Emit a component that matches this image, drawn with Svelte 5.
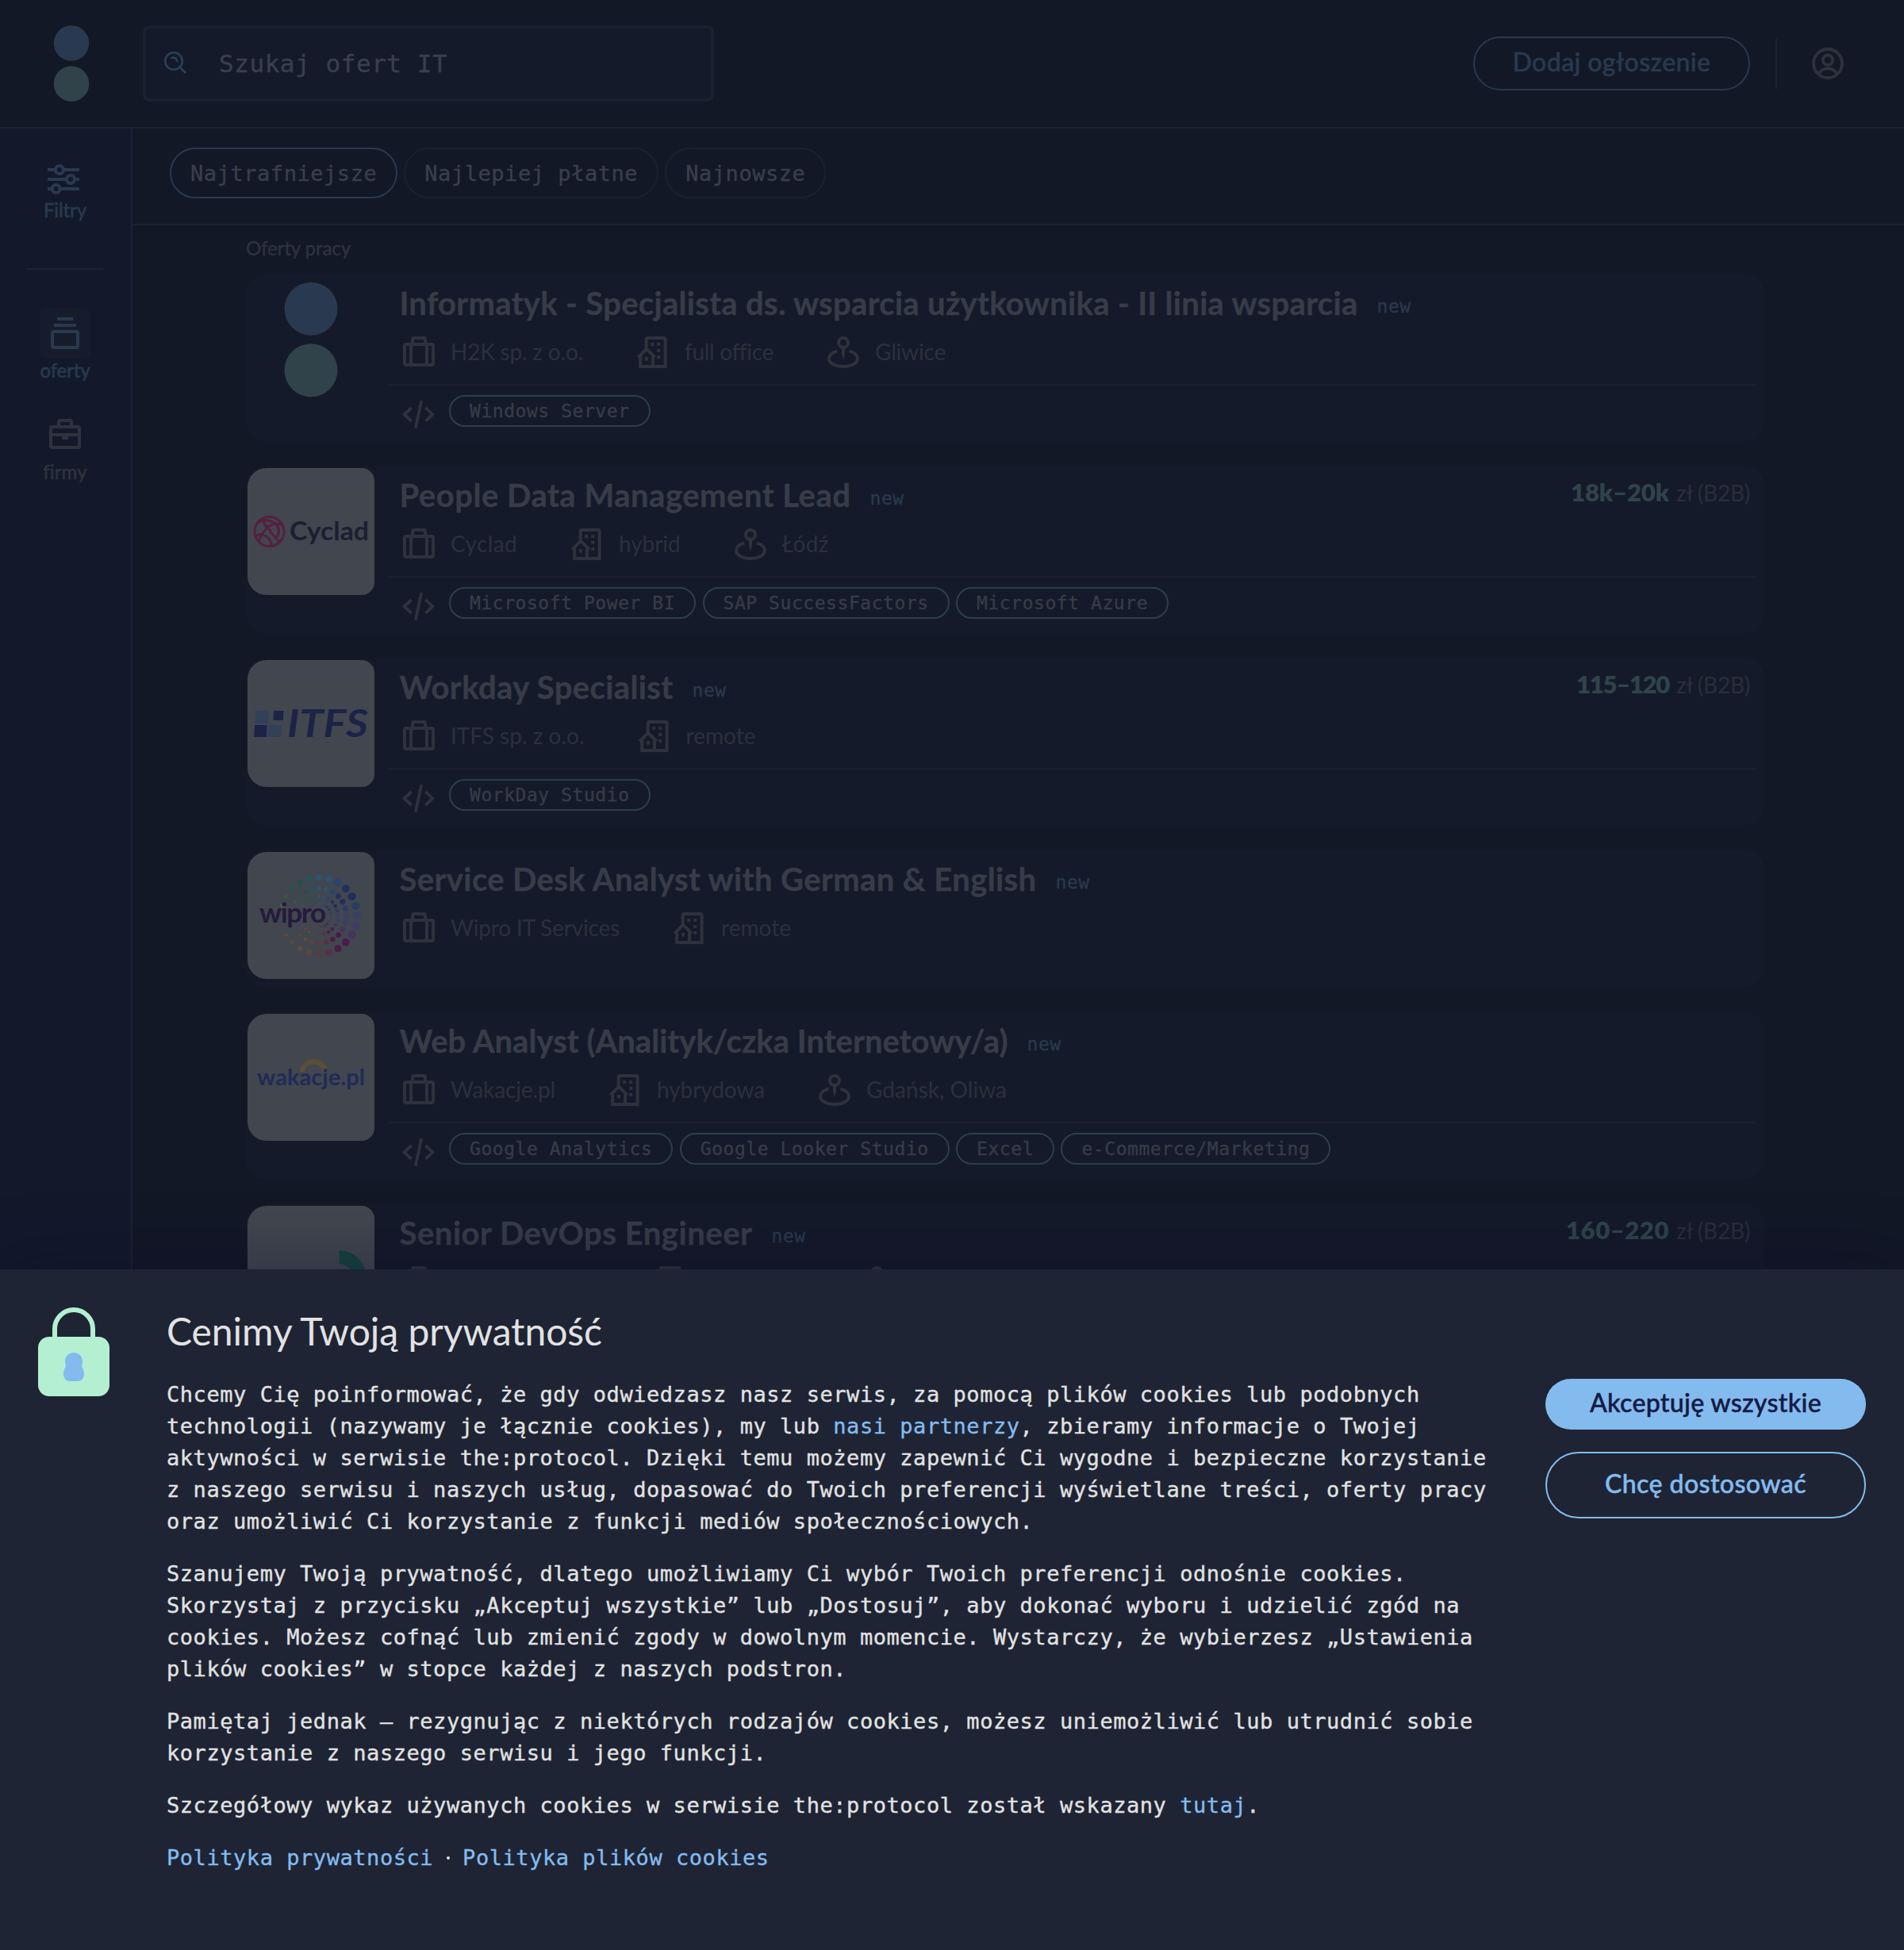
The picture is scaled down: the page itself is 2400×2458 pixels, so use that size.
<script>
  const tabs = ['Najtrafniejsze', 'Najlepiej płatne', 'Najnowsze'];

  // Each text is paired with the width its tracking is fitted to.
  const offers = [
    {
      logo: 'dots', title: ['Informatyk - Specjalista ds. wsparcia użytkownika - II linia wsparcia', 1208],
      meta: [['case', 'H2K sp. z o.o.', 167], ['office', 'full office', 110.5], ['pin', 'Gliwice', 89]],
      tags: ['Windows Server']
    },
    {
      logo: 'cyclad', title: ['People Data Management Lead', 569], salary: ['18k–20k', 124],
      meta: [['case', 'Cyclad', 84], ['office', 'hybrid', 77.5], ['pin', 'Łódź', 59]],
      tags: ['Microsoft Power BI', 'SAP SuccessFactors', 'Microsoft Azure']
    },
    {
      logo: 'itfs', title: ['Workday Specialist', 345], salary: ['115–120', 117],
      meta: [['case', 'ITFS sp. z o.o.', 168.5], ['office', 'remote', 88]],
      tags: ['WorkDay Studio']
    },
    {
      logo: 'wipro', title: ['Service Desk Analyst with German & English', 803],
      meta: [['case', 'Wipro IT Services', 213], ['office', 'remote', 88]],
      tags: []
    },
    {
      logo: 'wakacje', title: ['Web Analyst (Analityk/czka Internetowy/a)', 767],
      meta: [['case', 'Wakacje.pl', 132], ['office', 'hybrydowa', 136], ['pin', 'Gdańsk, Oliwa', 177]],
      tags: ['Google Analytics', 'Google Looker Studio', 'Excel', 'e-Commerce/Marketing']
    },
    {
      logo: 'ring', title: ['Senior DevOps Engineer', 445], salary: ['160–220', 130],
      meta: [['case', '', 185], ['office', '', 136], ['pin', '', 120]],
      tags: []
    }
  ];

  const hues = ['#3a3f66', '#2c3a66', '#202e5c', '#203160', '#2a4470', '#2e5273', '#2d566d', '#24565f', '#1d5450', '#275548', '#3a5545', '#4c5a44', '#555',
    '#555', '#5c4b3c', '#5e4738', '#614a3a', '#5f4538', '#5c3a42', '#5a2f47', '#4e1c46', '#4b1b4a', '#45345c', '#3e3c66'];
  const rings = [[48, 5.2], [34.5, 3.6], [24, 2.4], [15, 1.4]];
  const dots = rings.flatMap(([r, s]) =>
    hues.map((fill, i) => {
      const a = (i * 15 * Math.PI) / 180;
      return { i, fill, x: 90 + r * Math.cos(a), y: 80 - r * Math.sin(a), s: s * (0.76 + 0.24 * Math.cos(a)) };
    }).filter((d) => d.i !== 12 && d.i !== 13)
  );

  function fit(node, width) {
    const n = [...node.textContent].length;
    if (n) node.style.letterSpacing = `${(width - node.getBoundingClientRect().width) / n}px`;
    else node.style.width = `${width}px`;
  }
</script>

{#snippet icon(name)}
  <svg class="icon" viewBox="0 0 24 24" fill="none" stroke="currentColor" stroke-width="2">
    {#if name === 'case'}
      <rect x="3" y="7" width="18" height="13" rx="1" />
      <path d="M7 7v13M17 7v13M8 7V4a1 1 0 0 1 1-1h6a1 1 0 0 1 1 1v3" />
    {:else if name === 'office'}
      <path d="M7.8 10.5V4a1 1 0 0 1 1-1h10a1 1 0 0 1 1 1v17H4.1v-6.5" />
      <path d="M2.6 15.3 8 9.9l5.4 5.4M12 14v7" />
      <path d="M8 15v2.2M11.6 6v2M15.6 6v2M15.6 10v2M15.6 14v2" />
    {:else if name === 'pin'}
      <circle cx="12" cy="6" r="3" />
      <path d="M11 9h2v4l-1 3.5-1-3.500z" fill="currentColor" stroke="none" />
      <path d="M8.200 11.200C5 12.200 3 14 3 16c0 3 4 5 9 5s9-2 9-5c0-2-2-3.800-5.200-4.800" />
    {:else}
      <path d="M7.300 8 2.800 12.200l4.500 4.200M16.200 8l4.500 4.200-4.500 4.200M13.600 3.500 9.900 20.800" stroke-width="1.900" />
    {/if}
  </svg>
{/snippet}

{#snippet logo(name)}
  <svg class="logo" class:plain={name === 'dots'} viewBox="0 0 160 160">
    {#if name === 'dots'}
      <circle cx="80" cy="41.300" r="33.500" fill="#29394f" />
      <circle cx="80" cy="118.700" r="33.500" fill="#30434a" />
    {:else if name === 'cyclad'}
      <g fill="none" stroke="#551f42" stroke-width="3">
        <circle cx="27.500" cy="80" r="18.500" />
        <path d="M13 69c8-6 19-3 24 3 4 5 3 12-2 17M44 72c-8-4-16-1-21 5-5 5-7 10-9 16M19 64c1 7 6 11 11 16M28 80c5 5 9 9 12 13M10 86c5-4 11-3 16 2 3 3 4 6 4 10" />
      </g>
      <text x="53" y="91" font-size="33" font-weight="700" textLength="100" lengthAdjust="spacingAndGlyphs" fill="#1a2031">Cyclad</text>
    {:else if name === 'itfs'}
      <path d="M10.500 64H27l-1 16H9.500zM26.500 82h16.500l-.8 15H25.800z" fill="#324059" />
      <path d="M33 64h12.500l-.7 12H32.500zM9.200 82H24.500l-.7 15H8.200z" fill="#1c2347" />
      <text x="50" y="97" font-size="47" font-weight="700" font-style="italic" textLength="102" lengthAdjust="spacingAndGlyphs" fill="#1c2347">ITFS</text>
    {:else if name === 'wipro'}
      {#each dots as d}<circle cx={d.x} cy={d.y} r={d.s} fill={d.fill} />{/each}
      <path d="M15 70h83v21H62v12H46V91H15z" fill="#41464f" />
      <text x="15" y="89" font-size="35" font-weight="700" textLength="84" fill="#251a3c">wipro</text>
    {:else if name === 'wakacje'}
      <path d="M69 73c1-17 28-17 29 0" fill="none" stroke="#5a4f36" stroke-width="6.500" />
      <text x="12" y="90" font-size="29" font-weight="700" textLength="136" fill="#1f2c55">wakacje.pl</text>
    {:else}
      <path d="M115.500 56A35 35 0 0 1 150 91h-17a18 18 0 0 0-17.500-18z" fill="#17443f" />
    {/if}
  </svg>
{/snippet}

<div class="page">
  <header>
    <svg class="brand" viewBox="0 0 46 96">
      <circle cx="23" cy="22.400" r="22.300" fill="#29394f" />
      <circle cx="23" cy="73.600" r="22.300" fill="#30434a" />
    </svg>
    <div class="search">
      <svg viewBox="0 0 30 30" fill="none" stroke="#29405a" stroke-width="2.600">
        <circle cx="13" cy="13" r="10.800" />
        <path d="m20.500 20.500 7.500 7.500M9.500 9.500c3.500-2.500 8 0 7.500 4.500" />
      </svg>
      <span class="mono">Szukaj ofert IT</span>
    </div>
    <button class="post"><span use:fit={250}>Dodaj ogłoszenie</span></button>
    <i class="bar"></i>
    <svg class="user" viewBox="0 0 40 40" fill="none" stroke="#2d323d" stroke-width="3.800">
      <circle cx="20" cy="20" r="18" />
      <circle cx="20" cy="15.700" r="6.200" />
      <path d="M9 34c2-10 20-10 22 0" />
    </svg>
  </header>

  <div class="shell">
    <nav>
      <svg class="filters" viewBox="0 0 40 38" fill="#13192b" stroke="currentColor" stroke-width="4">
        <path d="M0 7h40M0 19h40M0 31h40" />
        <circle cx="15" cy="7" r="5" /><circle cx="29" cy="19" r="5" /><circle cx="10.700" cy="31" r="5" />
      </svg>
      <span class="label"><span use:fit={54}>Filtry</span></span>
      <i class="rule"></i>
      <div class="tile active">
        <svg viewBox="0 0 64 64" fill="none" stroke="currentColor" stroke-width="4">
          <path d="M22 14h20M18 22h28" /><rect x="16" y="30" width="32" height="20" rx="1.500" />
        </svg>
      </div>
      <span class="label"><span use:fit={63}>oferty</span></span>
      <div class="tile grey">
        <svg viewBox="0 0 64 64" fill="none" stroke="currentColor" stroke-width="4">
          <rect x="14" y="22" width="36" height="26" rx="1.500" />
          <path d="M24 22v-6.500a1.500 1.500 0 0 1 1.500-1.500h13a1.500 1.500 0 0 1 1.500 1.500V22M14 32h36M28 36h8" />
        </svg>
      </div>
      <span class="label grey"><span use:fit={55}>firmy</span></span>
    </nav>

    <main>
      <div class="tabs mono">
        {#each tabs as tab, i}<button class:on={i === 0}>{tab}</button>{/each}
      </div>
      <section>
        <h2><span use:fit={132}>Oferty pracy</span></h2>
        {#each offers as offer}
          <article>
            <div class="side">{@render logo(offer.logo)}</div>
            <div class="body">
              <div class="top">
                <h3 use:fit={offer.title[1]}>{offer.title[0]}</h3>
                <span class="new mono">new</span>
                {#if offer.salary}
                  <p class="salary"><b use:fit={offer.salary[1]}>{offer.salary[0]}</b><span use:fit={93}>zł (B2B)</span></p>
                {/if}
              </div>
              <div class="meta">
                {#each offer.meta as [name, text, width]}
                  <div class="item">{@render icon(name)}<span use:fit={width}>{text}</span></div>
                {/each}
              </div>
              {#if offer.tags.length}
                <div class="tech">
                  {@render icon('code')}
                  {#each offer.tags as tag}<span class="tag mono">{tag}</span>{/each}
                </div>
              {/if}
            </div>
          </article>
        {/each}
      </section>
    </main>
  </div>

  <aside>
    <svg class="lock" viewBox="0 0 90 112">
      <path d="M21 40V27a24 24 0 0 1 48 0v13" fill="none" stroke="#b4efd2" stroke-width="6" />
      <rect y="37" width="90" height="75" rx="14" fill="#b4efd2" />
      <path d="M45 57c7 0 11 5 11 11 0 2-.3 4-1 6 2 3 3 7 3 10 0 5-3 9-8 9H40c-5 0-8-4-8-9 0-3 1-7 3-10-.7-2-1-4-1-6 0-6 4-11 11-11z" fill="#84bbef" />
    </svg>
    <div class="copy">
      <h1><span use:fit={549}>Cenimy Twoją prywatność</span></h1>
      <div class="text mono">
        <p>Chcemy Cię poinformować, że gdy odwiedzasz nasz serwis, za pomocą plików cookies lub podobnych<br />technologii (nazywamy je łącznie cookies), my lub <a href="#partners">nasi partnerzy</a>, zbieramy informacje o Twojej<br />aktywności w serwisie the:protocol. Dzięki temu możemy zapewnić Ci wygodne i bezpieczne korzystanie<br />z naszego serwisu i naszych usług, dopasować do Twoich preferencji wyświetlane treści, oferty pracy<br />oraz umożliwić Ci korzystanie z funkcji mediów społecznościowych.</p>
        <p>Szanujemy Twoją prywatność, dlatego umożliwiamy Ci wybór Twoich preferencji odnośnie cookies.<br />Skorzystaj z przycisku „Akceptuj wszystkie” lub „Dostosuj”, aby dokonać wyboru i udzielić zgód na<br />cookies. Możesz cofnąć lub zmienić zgody w dowolnym momencie. Wystarczy, że wybierzesz „Ustawienia<br />plików cookies” w stopce każdej z naszych podstron.</p>
        <p>Pamiętaj jednak – rezygnując z niektórych rodzajów cookies, możesz uniemożliwić lub utrudnić sobie<br />korzystanie z naszego serwisu i jego funkcji.</p>
        <p>Szczegółowy wykaz używanych cookies w serwisie the:protocol został wskazany <a href="#list">tutaj</a>.</p>
        <p class="links"><a href="#privacy">Polityka prywatności</a><i></i><a href="#cookies">Polityka plików cookies</a></p>
      </div>
    </div>
    <div class="actions">
      <button class="accept"><span use:fit={292}>Akceptuję wszystkie</span></button>
      <button class="adjust"><span use:fit={254}>Chcę dostosować</span></button>
    </div>
  </aside>
</div>

<style>
  :global(body) { background: #121826; }
  * { box-sizing: border-box; margin: 0; }
  .page {
    position: relative; width: 2400px; height: 2458px; overflow: hidden;
    background: #121826; color: #373c48; font-family: Lato, sans-serif; white-space: nowrap;
  }
  .mono { font-family: "DejaVu Sans Mono", monospace; letter-spacing: 0.55px; -webkit-text-stroke: 0.35px currentColor; }
  button { background: none; font: inherit; letter-spacing: inherit; color: inherit; padding: 0; }
  i { display: block; }

  header { display: flex; align-items: center; height: 162px; padding: 0 76px 0 67px; border-bottom: 2px solid #1c2230; }
  .brand { width: 46px; height: 96px; }
  .search {
    display: flex; align-items: center; gap: 40px; width: 720px; height: 96px; margin-left: 67px; padding-left: 22px;
    border: 4px solid #1b2130; border-radius: 8px; background: #141a29; color: #3a3f4b; font-size: 31px;
  }
  .search svg { width: 30px; height: 30px; margin-top: -2px; }
  .post {
    width: 349px; height: 68px; margin-left: auto; padding-bottom: 5px; border: 2px solid #29394f; border-radius: 34px;
    color: #29394f; font-size: 32px; font-weight: 500; -webkit-text-stroke: 0.5px currentColor;
  }
  .bar { width: 2px; height: 64px; margin: 0 44px 0 32px; background: #1c2230; }
  .user { width: 40px; height: 40px; }

  .shell { display: flex; height: 2296px; }
  nav {
    display: flex; flex-direction: column; align-items: center; width: 167px; padding: 45px 1px 0 0;
    border-right: 2px solid #1c2230; background: #13192b; color: #29394f;
  }
  .filters { width: 40px; height: 38px; margin-right: 4px; }
  .label { height: 28px; margin-top: 5px; line-height: 30px; font-size: 24px; font-weight: 500; -webkit-text-stroke: 0.4px currentColor; }
  .rule { width: 96px; height: 2px; margin: 60px 0 48px; background: #1c2230; }
  .tile { width: 64px; height: 64px; border-radius: 8px; }
  .tile svg { display: block; }
  .tile + .label { margin-top: 0; margin-bottom: 36px; }
  .active { background: #161c2c; }
  .grey { color: #2d323d; }

  main { flex: 1; }
  .tabs { display: flex; gap: 8px; height: 122px; padding: 24px 0 0 47px; border-bottom: 2px solid #1c2230; font-size: 27px; color: #3a3f4b; }
  .tabs button { height: 64px; padding: 0 24px; border: 2px solid #1a2030; border-radius: 32px; }
  .tabs .on { border-color: #29394f; }
  section { padding: 7px 176px 0 143px; }
  h2 { height: 40px; margin-bottom: 15px; line-height: 43px; font-size: 24px; font-weight: 500; color: #2d323e; -webkit-text-stroke: 0.3px currentColor; }

  article { display: flex; min-height: 172px; margin-bottom: 32px; padding: 2px 10px 10px 2px; border-radius: 24px; background: #141a29; }
  .side { width: 176px; }
  .logo { display: block; width: 160px; height: 160px; border-radius: 24px 16px 16px 24px; background: #41464f; font-family: Lato, sans-serif; }
  .plain { background: none; }
  .body { flex: 1; padding-top: 8px; }
  .top { display: flex; align-items: flex-start; height: 48px; padding: 0 8px 0 15.5px; }
  h3 { line-height: 52px; font-size: 40px; font-weight: 700; -webkit-text-stroke: 0.4px currentColor; }
  .new { margin-left: 24px; line-height: 60px; font-size: 23px; color: #29394f; }
  .salary { display: flex; align-items: baseline; gap: 9px; margin-left: auto; line-height: 44px; font-size: 28px; color: #292e3a; }
  .salary b { font-size: 31px; font-weight: 800; color: #30434a; }
  .icon { flex: none; width: 48px; height: 48px; color: #2d323d; }
  .meta { display: flex; gap: 64px; height: 48px; margin-top: 16px; padding-left: 16px; }
  .item { display: flex; gap: 16px; line-height: 46px; font-size: 28px; color: #2b303c; }
  .tech { display: flex; gap: 8.4px; height: 62px; margin-top: 16px; padding: 12px 0 0 16px; border-top: 2px solid #1a202f; }
  .tech .icon { margin-right: 5.6px; }
  .tag { height: 40px; padding: 0 24px; border: 2px solid #2c3f48; border-radius: 20px; line-height: 36px; font-size: 23px; }

  aside {
    position: absolute; left: 0; right: 0; bottom: 0; display: flex; align-items: flex-start; height: 858px; padding: 46px 48px 0;
    background: #1e2433; color: #e2e2e3; box-shadow: 0 0 80px rgba(12, 8, 44, 0.4);
  }
  .lock { width: 90px; height: 112px; margin-top: 2px; }
  .copy { margin-left: 72px; }
  h1 { height: 60px; line-height: 64px; font-size: 48px; font-weight: 400; }
  .text { margin-top: 32px; font-size: 27px; line-height: 40px; }
  .text p { margin-bottom: 26px; }
  a { color: #84bbef; text-decoration: none; }
  .links { display: flex; align-items: center; }
  .links i { width: 4px; height: 4px; margin: 0 16px 0 17px; border-radius: 2px; background: #e2e2e3; }
  .actions {
    display: flex; flex-direction: column; gap: 28px; width: 404px; margin: 92px 0 0 auto;
    font-size: 32px; font-weight: 500; -webkit-text-stroke: 0.5px currentColor;
  }
  .accept { height: 64px; padding-bottom: 5px; border: 0; border-radius: 32px; background: #84bbef; color: #131a43; }
  .adjust { height: 84px; padding-bottom: 5px; border: 2px solid #84bbef; border-radius: 42px; color: #84bbef; }
</style>
